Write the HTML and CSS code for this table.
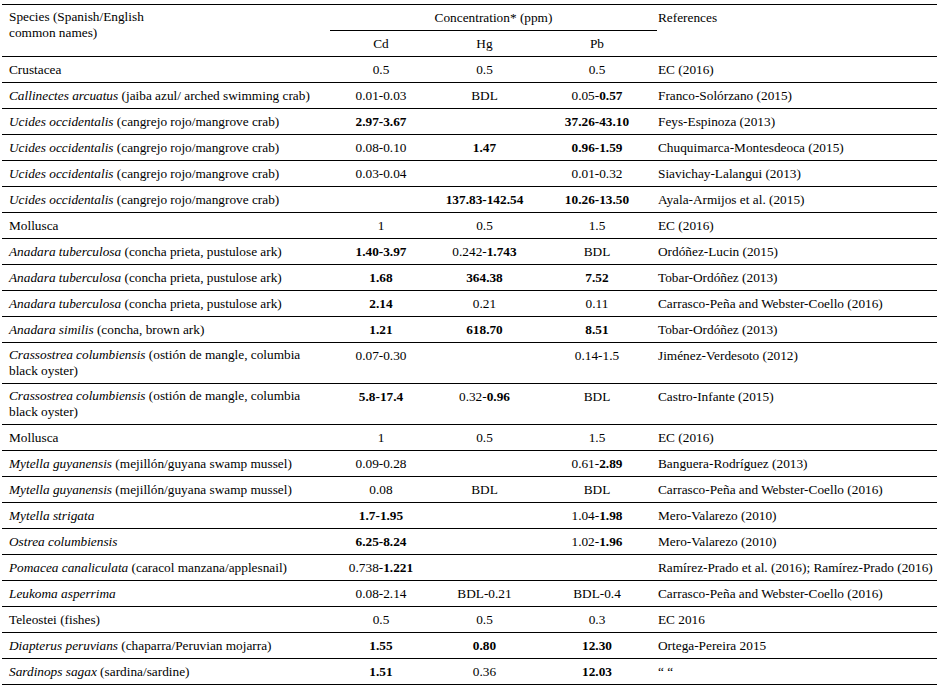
FILE: index.html
```html
<!DOCTYPE html>
<html lang="en">
<head>
<meta charset="utf-8">
<title>Heavy metal concentrations</title>
<link rel="stylesheet" href="styles.css">
</head>
<body>
<table class="tbl">
  <colgroup>
    <col class="c-sp"><col class="c-cd"><col class="c-hg"><col class="c-pb"><col class="c-ref">
  </colgroup>
  <thead>
    <tr>
      <th class="sp head-sp" rowspan="2">Species (Spanish/English<br>common names)</th>
      <th class="conc" colspan="3">Concentration* (ppm)</th>
      <th class="ref" rowspan="2">References</th>
    </tr>
    <tr>
      <th class="num">Cd</th>
      <th class="num">Hg</th>
      <th class="num">Pb</th>
    </tr>
  </thead>
  <tbody>
    <tr><td class="sp">Crustacea</td><td class="num">0.5</td><td class="num">0.5</td><td class="num">0.5</td><td class="ref">EC (2016)</td></tr>
    <tr><td class="sp"><i>Callinectes arcuatus</i> (jaiba azul/ arched swimming crab)</td><td class="num">0.01-0.03</td><td class="num">BDL</td><td class="num">0.05-<b>0.57</b></td><td class="ref">Franco-Solórzano (2015)</td></tr>
    <tr><td class="sp"><i>Ucides occidentalis</i> (cangrejo rojo/mangrove crab)</td><td class="num"><b>2.97-3.67</b></td><td class="num"></td><td class="num"><b>37.26-43.10</b></td><td class="ref">Feys-Espinoza (2013)</td></tr>
    <tr><td class="sp"><i>Ucides occidentalis</i> (cangrejo rojo/mangrove crab)</td><td class="num">0.08-0.10</td><td class="num"><b>1.47</b></td><td class="num"><b>0.96-1.59</b></td><td class="ref">Chuquimarca-Montesdeoca (2015)</td></tr>
    <tr><td class="sp"><i>Ucides occidentalis</i> (cangrejo rojo/mangrove crab)</td><td class="num">0.03-0.04</td><td class="num"></td><td class="num">0.01-0.32</td><td class="ref">Siavichay-Lalangui (2013)</td></tr>
    <tr><td class="sp"><i>Ucides occidentalis</i> (cangrejo rojo/mangrove crab)</td><td class="num"></td><td class="num"><b>137.83-142.54</b></td><td class="num"><b>10.26-13.50</b></td><td class="ref">Ayala-Armijos et al. (2015)</td></tr>
    <tr><td class="sp">Mollusca</td><td class="num">1</td><td class="num">0.5</td><td class="num">1.5</td><td class="ref">EC (2016)</td></tr>
    <tr><td class="sp"><i>Anadara tuberculosa</i> (concha prieta, pustulose ark)</td><td class="num"><b>1.40-3.97</b></td><td class="num">0.242-<b>1.743</b></td><td class="num">BDL</td><td class="ref">Ordóñez-Lucin (2015)</td></tr>
    <tr><td class="sp"><i>Anadara tuberculosa</i> (concha prieta, pustulose ark)</td><td class="num"><b>1.68</b></td><td class="num"><b>364.38</b></td><td class="num"><b>7.52</b></td><td class="ref">Tobar-Ordóñez (2013)</td></tr>
    <tr><td class="sp"><i>Anadara tuberculosa</i> (concha prieta, pustulose ark)</td><td class="num"><b>2.14</b></td><td class="num">0.21</td><td class="num">0.11</td><td class="ref">Carrasco-Peña and Webster-Coello (2016)</td></tr>
    <tr><td class="sp"><i>Anadara similis</i> (concha, brown ark)</td><td class="num"><b>1.21</b></td><td class="num"><b>618.70</b></td><td class="num"><b>8.51</b></td><td class="ref">Tobar-Ordóñez (2013)</td></tr>
    <tr class="two"><td class="sp"><i>Crassostrea columbiensis</i> (ostión de mangle, columbia<br>black oyster)</td><td class="num">0.07-0.30</td><td class="num"></td><td class="num">0.14-1.5</td><td class="ref">Jiménez-Verdesoto (2012)</td></tr>
    <tr class="two"><td class="sp"><i>Crassostrea columbiensis</i> (ostión de mangle, columbia<br>black oyster)</td><td class="num"><b>5.8-17.4</b></td><td class="num">0.32-<b>0.96</b></td><td class="num">BDL</td><td class="ref">Castro-Infante (2015)</td></tr>
    <tr><td class="sp">Mollusca</td><td class="num">1</td><td class="num">0.5</td><td class="num">1.5</td><td class="ref">EC (2016)</td></tr>
    <tr><td class="sp"><i>Mytella guyanensis</i> (mejillón/guyana swamp mussel)</td><td class="num">0.09-0.28</td><td class="num"></td><td class="num">0.61-<b>2.89</b></td><td class="ref">Banguera-Rodríguez (2013)</td></tr>
    <tr><td class="sp"><i>Mytella guyanensis</i> (mejillón/guyana swamp mussel)</td><td class="num">0.08</td><td class="num">BDL</td><td class="num">BDL</td><td class="ref">Carrasco-Peña and Webster-Coello (2016)</td></tr>
    <tr><td class="sp"><i>Mytella strigata</i></td><td class="num"><b>1.7-1.95</b></td><td class="num"></td><td class="num">1.04-<b>1.98</b></td><td class="ref">Mero-Valarezo (2010)</td></tr>
    <tr><td class="sp"><i>Ostrea columbiensis</i></td><td class="num"><b>6.25-8.24</b></td><td class="num"></td><td class="num">1.02-<b>1.96</b></td><td class="ref">Mero-Valarezo (2010)</td></tr>
    <tr><td class="sp"><i>Pomacea canaliculata</i> (caracol manzana/applesnail)</td><td class="num">0.738-<b>1.221</b></td><td class="num"></td><td class="num"></td><td class="ref">Ramírez-Prado et al. (2016); Ramírez-Prado (2016)</td></tr>
    <tr><td class="sp"><i>Leukoma asperrima</i></td><td class="num">0.08-2.14</td><td class="num">BDL-0.21</td><td class="num">BDL-0.4</td><td class="ref">Carrasco-Peña and Webster-Coello (2016)</td></tr>
    <tr><td class="sp">Teleostei (fishes)</td><td class="num">0.5</td><td class="num">0.5</td><td class="num">0.3</td><td class="ref">EC 2016</td></tr>
    <tr><td class="sp"><i>Diapterus peruvians</i> (chaparra/Peruvian mojarra)</td><td class="num"><b>1.55</b></td><td class="num"><b>0.80</b></td><td class="num"><b>12.30</b></td><td class="ref">Ortega-Pereira 2015</td></tr>
    <tr><td class="sp"><i>Sardinops sagax</i> (sardina/sardine)</td><td class="num"><b>1.51</b></td><td class="num">0.36</td><td class="num"><b>12.03</b></td><td class="ref">“ “</td></tr>
  </tbody>
</table>
</body>
</html>
```

FILE: styles.css
```css
html, body {
  margin: 0;
  padding: 0;
  background: #ffffff;
}

body {
  font-family: "Liberation Serif", "Times New Roman", serif;
  font-size: 13.3px;
  color: #000000;
}

.tbl {
  border-collapse: collapse;
  table-layout: fixed;
  width: 935px;
  margin: 4px 0 0 2px;
  border-top: 1px solid #000000;
}

.c-sp { width: 328px; }
.c-cd { width: 102px; }
.c-hg { width: 105px; }
.c-pb { width: 120px; }
.c-ref { width: 280px; }

.tbl th,
.tbl td {
  padding: 5px 0;
  line-height: 15px;
  font-weight: normal;
  vertical-align: top;
  text-align: left;
}

.tbl thead th {
  border-bottom: 1px solid #000000;
}

.tbl tbody td {
  border-bottom: 1px solid #000000;
}

.tbl .sp {
  padding-left: 7px;
  padding-right: 10px;
}

.tbl .head-sp {
  line-height: 16px;
  padding-top: 4px;
}

.tbl .two .sp {
  line-height: 16px;
  padding-top: 4px;
  padding-bottom: 4px;
}

.tbl .num {
  text-align: center;
  white-space: nowrap;
}

.tbl .conc {
  text-align: center;
}

.tbl .ref {
  padding-left: 1px;
  white-space: nowrap;
}

.tbl b {
  font-weight: bold;
}
```
